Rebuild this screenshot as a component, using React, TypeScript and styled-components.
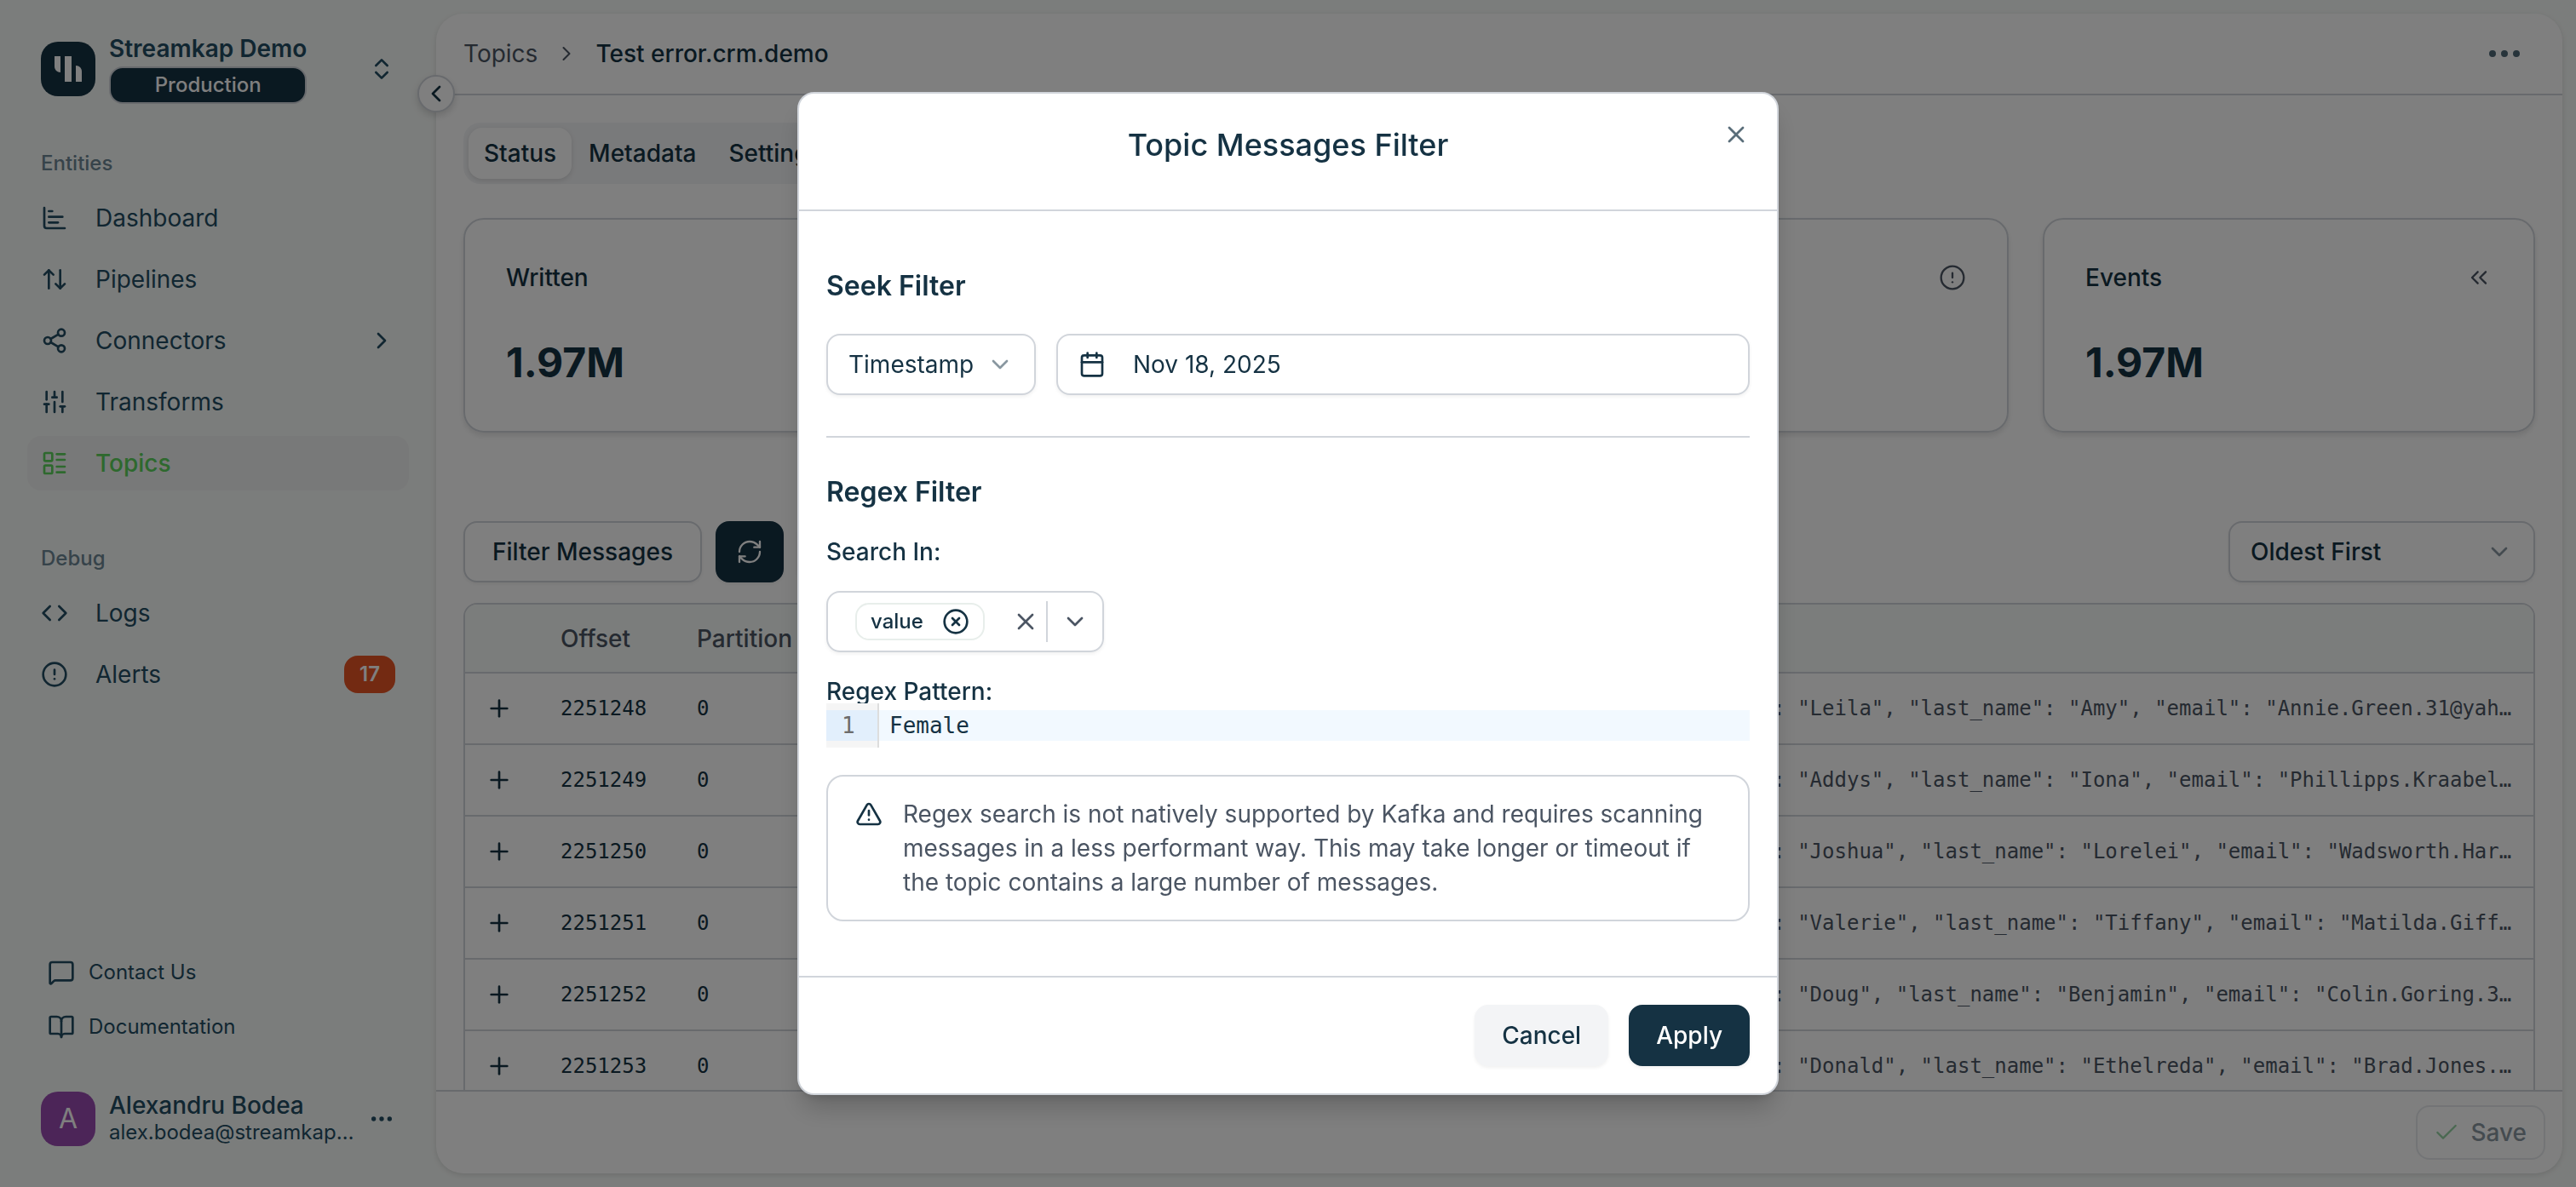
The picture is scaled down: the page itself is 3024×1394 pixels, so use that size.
import React from "react";
import styled, { createGlobalStyle, css } from "styled-components";
import {
  ArrowUpDown,
  BookOpen,
  Calendar,
  ChartBar,
  Check,
  ChevronDown,
  ChevronLeft,
  ChevronRight,
  ChevronsLeft,
  ChevronsUpDown,
  CircleAlert,
  CircleX,
  Code,
  Download,
  Ellipsis,
  LayoutList,
  MessageSquare,
  Plus,
  RefreshCw,
  Share2,
  SlidersVertical,
  TriangleAlert,
  X,
} from "lucide-react";

const color = {
  ink: "#153243",
  sidebarInk: "#234d63",
  muted: "#4b5563",
  line: "#d1d5db",
  canvas: "#f7faf8",
  soft: "#f3f4f6",
  green: "#5cd25c",
  orange: "#e65424",
};

const shadow = "0 2px 4px rgba(0, 0, 0, 0.06)";
const mono = '"DejaVu Sans Mono", "Liberation Mono", monospace';

const GlobalStyle = createGlobalStyle`
  *, *::before, *::after { box-sizing: border-box; }
  body {
    margin: 0;
    background: ${color.canvas};
    color: ${color.ink};
    font-family: Inter, "Liberation Sans", sans-serif;
    font-size: 28px;
    line-height: 40px;
  }
  button, input, select { font: inherit; color: inherit; }
  h1, h2, h3, p { margin: 0; font: inherit; }
  svg { display: block; flex: none; }
`;

/* ---------- shell ---------- */

const Shell = styled.div`
  display: flex;
  height: 100vh;
  padding: 16px 16px 16px 0;
  overflow: hidden;
`;

const Sidebar = styled.aside`
  display: flex;
  flex-direction: column;
  flex: none;
  width: 512px;
  padding: 24px 32px 32px;
  color: ${color.sidebarInk};
`;

const BareButton = styled.button`
  display: flex;
  align-items: center;
  justify-content: center;
  padding: 0;
  border: 0;
  background: none;
  cursor: pointer;
`;

const Workspace = styled.div`
  display: flex;
  align-items: center;
  gap: 16px;
  padding: 0 16px;
  margin-bottom: 54px;
`;

const WorkspaceText = styled.div`
  display: flex;
  flex-direction: column;
  gap: 4px;
  margin-right: auto;
`;

const WorkspaceName = styled.span`
  font-weight: 600;
  line-height: 34px;
`;

const EnvBadge = styled.span`
  border: 2px solid ${color.line};
  border-radius: 16px;
  background: ${color.ink};
  color: #fff;
  font-size: 24px;
  font-weight: 500;
  line-height: 40px;
  text-align: center;
`;

const NavGroup = styled.nav`
  display: flex;
  flex-direction: column;
  gap: 8px;
  margin-bottom: 64px;
`;

const NavHeading = styled.h3`
  padding: 0 16px;
  margin-bottom: 8px;
  color: #6d8694;
  font-size: 24px;
  font-weight: 500;
  line-height: 32px;
`;

const NavLink = styled.a<{ $active?: boolean }>`
  display: flex;
  align-items: center;
  gap: 32px;
  height: 64px;
  padding: 0 16px;
  border-radius: 16px;
  color: inherit;
  text-decoration: none;
  ${(p) =>
    p.$active &&
    css`
      background: #f1f2f2;
      color: ${color.green};
      font-weight: 500;
    `}
`;

const NavLabel = styled.span`
  flex: 1;
`;

const CountBadge = styled.span`
  padding: 0 18px;
  border-radius: 16px;
  background: ${color.orange};
  color: #fff;
  font-size: 24px;
  font-weight: 600;
  line-height: 44px;
`;

const HelpLinks = styled.nav`
  display: flex;
  flex-direction: column;
  gap: 32px;
  padding: 0 24px;
  margin: auto 0 60px;
`;

const HelpLink = styled.a`
  display: flex;
  align-items: center;
  gap: 16px;
  color: inherit;
  font-size: 24px;
  line-height: 32px;
  text-decoration: none;
`;

const Account = styled.div`
  display: flex;
  align-items: center;
  gap: 16px;
  padding: 0 16px;
`;

const Avatar = styled.span`
  flex: none;
  width: 64px;
  border-radius: 20px;
  background: #984ab0;
  color: #fff;
  font-size: 32px;
  line-height: 64px;
  text-align: center;
`;

const AccountText = styled.div`
  flex: 1;
  min-width: 0;
  line-height: 32px;
`;

const AccountName = styled.div`
  font-weight: 500;
`;

const AccountEmail = styled.div`
  overflow: hidden;
  font-size: 24px;
  text-overflow: ellipsis;
  white-space: nowrap;
`;

/* ---------- main panel ---------- */

const Panel = styled.main`
  position: relative;
  display: flex;
  flex: 1;
  flex-direction: column;
  min-width: 0;
  border-radius: 32px;
  background: #fff;
  box-shadow: 0 2px 6px rgba(0, 0, 0, 0.12);
`;

const CollapseButton = styled(BareButton)`
  position: absolute;
  top: 72px;
  left: -22px;
  width: 44px;
  height: 44px;
  border: 2px solid ${color.line};
  border-radius: 50%;
  background: #fff;
  box-shadow: 0 4px 8px rgba(0, 0, 0, 0.15);
`;

const PanelHeader = styled.header`
  display: flex;
  align-items: center;
  justify-content: space-between;
  flex: none;
  height: 96px;
  padding: 0 44px 0 32px;
  border-bottom: 2px solid ${color.line};
`;

const Crumbs = styled.nav`
  display: flex;
  align-items: center;
  gap: 20px;
  color: ${color.muted};
`;

const CrumbLink = styled.a`
  color: inherit;
  text-decoration: none;
`;

const CrumbCurrent = styled.span`
  color: ${color.ink};
  font-weight: 500;
`;

const PanelBody = styled.div`
  flex: 1;
  min-height: 0;
  padding: 32px 32px 0;
  overflow: hidden;
`;

const TabList = styled.div`
  display: inline-flex;
  gap: 2px;
  height: 72px;
  padding: 6px;
  border-radius: 20px;
  background: ${color.soft};
`;

const Tab = styled.button<{ $selected?: boolean }>`
  padding: 0 18px;
  border: 0;
  border-radius: 16px;
  background: ${(p) => (p.$selected ? "#fff" : "transparent")};
  box-shadow: ${(p) => (p.$selected ? "0 2px 6px rgba(0, 0, 0, 0.12)" : "none")};
  font-weight: 500;
`;

const Stats = styled.section`
  display: grid;
  grid-template-columns: repeat(4, 1fr);
  gap: 40px;
  margin-top: 40px;
`;

const StatCard = styled.article`
  display: flex;
  flex-direction: column;
  gap: 52px;
  padding: 48px 48px 52px;
  border: 2px solid ${color.line};
  border-radius: 24px;
  box-shadow: 0 4px 6px rgba(0, 0, 0, 0.1);
`;

const StatHead = styled.div`
  display: flex;
  align-items: center;
  justify-content: space-between;
  font-weight: 500;

  svg {
    color: ${color.muted};
  }
`;

const StatValue = styled.div`
  font-size: 48px;
  font-weight: 700;
  line-height: 56px;
`;

const Toolbar = styled.div`
  display: flex;
  gap: 16px;
  margin: 104px 0 24px;
`;

const Button = styled.button<{ $tone: "outline" | "solid" | "soft" }>`
  display: flex;
  align-items: center;
  justify-content: center;
  height: 72px;
  padding: 0 32px;
  border: 2px solid transparent;
  border-radius: 16px;
  box-shadow: ${shadow};
  font-weight: 500;
  cursor: pointer;
  ${(p) =>
    ({
      outline: css`
        border-color: ${color.line};
        background: #fff;
      `,
      solid: css`
        border-color: ${color.ink};
        background: ${color.ink};
        color: #fff;
      `,
      soft: css`
        border-color: ${color.soft};
        background: ${color.soft};
      `,
    })[p.$tone]}
`;

const IconButton = styled(Button)`
  width: 80px;
  padding: 0;
`;

const SelectBox = styled.div<{ $wide?: boolean }>`
  position: relative;
  display: flex;
  flex: none;
  ${(p) =>
    p.$wide &&
    css`
      width: 360px;
      margin-left: auto;
      font-weight: 500;
    `}

  select {
    width: 100%;
    height: 72px;
    padding: 0 70px 0 24px;
    border: 2px solid ${color.line};
    border-radius: 16px;
    background: #fff;
    box-shadow: ${shadow};
    appearance: none;
  }

  svg {
    position: absolute;
    top: 20px;
    right: 26px;
    opacity: 0.5;
    pointer-events: none;
  }
`;

const TableFrame = styled.div`
  overflow: hidden;
  border: 2px solid ${color.line};
  border-radius: 16px;
`;

const Table = styled.table`
  width: 100%;
  border-spacing: 0;
  table-layout: fixed;

  th,
  td {
    overflow: hidden;
    padding: 0 24px;
    border-bottom: 2px solid ${color.line};
    text-align: left;
    text-overflow: ellipsis;
    white-space: nowrap;
  }

  th {
    height: 81px;
    background: ${color.canvas};
    color: ${color.muted};
    font-weight: 500;
  }

  td {
    height: 84px;
    font-family: ${mono};
    font-size: 24px;
  }
`;

const Col = styled.col<{ $width?: number }>`
  width: ${(p) => (p.$width ? `${p.$width}px` : "auto")};
`;

const ValueCell = styled.td`
  color: ${color.muted};
`;

const PanelFooter = styled.footer`
  display: flex;
  justify-content: flex-end;
  flex: none;
  padding: 16px 20px;
  border-top: 2px solid ${color.line};
`;

const SaveButton = styled.button`
  display: flex;
  align-items: center;
  gap: 12px;
  height: 64px;
  padding: 0 20px 0 18px;
  border: 2px solid ${color.line};
  border-radius: 16px;
  background: #fff;
  font-weight: 500;
  opacity: 0.5;

  svg {
    color: #2ea84a;
  }
`;

/* ---------- dialog ---------- */

const Backdrop = styled.div`
  position: fixed;
  inset: 0;
  display: flex;
  align-items: center;
  justify-content: center;
  background: rgba(0, 0, 0, 0.5);
`;

const Dialog = styled.div`
  position: relative;
  width: 1152px;
  max-width: 100%;
  border: 2px solid ${color.line};
  border-radius: 20px;
  background: #fff;
  box-shadow: 0 20px 30px -6px rgba(0, 0, 0, 0.2), 0 8px 12px -8px rgba(0, 0, 0, 0.2);
`;

const DialogHeader = styled.header`
  padding: 40px 32px 56px;
  border-bottom: 2px solid ${color.line};
`;

const DialogTitle = styled.h1`
  font-size: 36px;
  font-weight: 500;
  text-align: center;
`;

const CloseButton = styled(BareButton)`
  position: absolute;
  top: 32px;
  right: 32px;
  opacity: 0.7;
`;

const DialogBody = styled.div`
  padding: 72px 32px 64px;
`;

const SectionTitle = styled.h2`
  margin-bottom: 40px;
  font-size: 32px;
  font-weight: 600;
  line-height: 32px;
`;

const FieldRow = styled.div`
  display: flex;
  gap: 24px;
`;

const DateButton = styled.button`
  display: flex;
  align-items: center;
  flex: 1;
  gap: 32px;
  height: 72px;
  padding: 0 24px;
  border: 2px solid ${color.line};
  border-radius: 16px;
  background: #fff;
  box-shadow: ${shadow};
`;

const Divider = styled.hr`
  height: 2px;
  margin: 48px 0;
  border: 0;
  background: ${color.line};
`;

const FieldLabel = styled.label`
  display: block;
  font-weight: 500;
  line-height: 28px;
`;

const MultiSelect = styled.div`
  display: flex;
  align-items: center;
  width: fit-content;
  height: 72px;
  padding: 0 16px 0 32px;
  margin: 32px 0;
  border: 2px solid ${color.line};
  border-radius: 16px;
  box-shadow: ${shadow};
  color: ${color.muted};
`;

const Chip = styled.span`
  display: flex;
  align-items: center;
  gap: 22px;
  height: 44px;
  padding: 0 16px;
  margin-right: 32px;
  border: 2px solid #e8eeeb;
  border-radius: 16px;
  color: ${color.ink};
  font-size: 24px;
  font-weight: 500;
`;

const Separator = styled.span`
  width: 2px;
  height: 48px;
  margin: 0 16px 0 8px;
  background: ${color.line};
`;

const Editor = styled.div`
  position: relative;
  display: flex;
  font-family: ${mono};
  font-size: 26px;
  line-height: 36px;
`;

const Gutter = styled.div`
  flex: none;
  width: 62px;
  padding: 8px 0;
  border-right: 2px solid #dddddd;
  background: #f5f5f5;
`;

const LineNumber = styled.div`
  padding: 0 10px 0 18px;
  background: #e2effc;
  color: #6c6c6c;
`;

const CodeLine = styled.input`
  flex: 1;
  min-width: 0;
  height: 36px;
  padding: 0 12px;
  margin: 8px 0;
  border: 0;
  outline: 0;
  background: #f2f9ff;
`;

const Notice = styled.div`
  display: flex;
  align-items: flex-start;
  gap: 24px;
  padding: 24px 32px;
  margin-top: 32px;
  border: 2px solid ${color.line};
  border-radius: 20px;

  svg {
    margin-top: 4px;
  }

  p {
    color: ${color.muted};
  }
`;

const DialogFooter = styled.footer`
  display: flex;
  justify-content: flex-end;
  gap: 24px;
  padding: 32px;
  border-top: 2px solid ${color.line};
`;

const DialogButton = styled(Button)`
  padding: 0 30px;
`;

/* ---------- data ---------- */

const entities = [
  { label: "Dashboard", icon: ChartBar },
  { label: "Pipelines", icon: ArrowUpDown },
  { label: "Connectors", icon: Share2, nested: true },
  { label: "Transforms", icon: SlidersVertical },
  { label: "Topics", icon: LayoutList, active: true },
];

const debug = [
  { label: "Logs", icon: Code },
  { label: "Alerts", icon: CircleAlert, count: 17 },
];

const stats = [
  { label: "Written", value: "1.97M" },
  { label: "Read", value: "1.97M" },
  { label: "Errors", value: "0", icon: CircleAlert },
  { label: "Events", value: "1.97M", icon: ChevronsLeft },
];

const messages = [
  { offset: 2251248, first: "Leila", last: "Amy", email: "Annie.Green.31@yahoo.com" },
  { offset: 2251249, first: "Addys", last: "Iona", email: "Phillipps.Kraabel@yahoo.com" },
  { offset: 2251250, first: "Joshua", last: "Lorelei", email: "Wadsworth.Harris@yahoo.com" },
  { offset: 2251251, first: "Valerie", last: "Tiffany", email: "Matilda.Gifford@yahoo.com" },
  { offset: 2251252, first: "Doug", last: "Benjamin", email: "Colin.Goring.31@yahoo.com" },
  { offset: 2251253, first: "Donald", last: "Ethelreda", email: "Brad.Jones.12@yahoo.com" },
];

const columns = [
  { label: "", width: 88 },
  { label: "Offset", width: 160 },
  { label: "Partition", width: 902 },
  { label: "Value" },
];

/* ---------- parts ---------- */

const icon = { size: 32, strokeWidth: 2, "aria-hidden": true } as const;
const thin = { size: 32, strokeWidth: 1.75, "aria-hidden": true } as const;

type NavEntry = {
  label: string;
  icon: React.ElementType;
  active?: boolean;
  nested?: boolean;
  count?: number;
};

function NavItem({ entry }: { entry: NavEntry }) {
  const Icon = entry.icon;
  return (
    <NavLink href="#" $active={entry.active}>
      <Icon {...icon} />
      <NavLabel>{entry.label}</NavLabel>
      {entry.nested && <ChevronRight {...icon} />}
      {entry.count && <CountBadge>{entry.count}</CountBadge>}
    </NavLink>
  );
}

function Logo() {
  return (
    <svg width="64" height="64" viewBox="0 0 64 64" aria-hidden>
      <rect width="64" height="64" rx="20" fill={color.ink} />
      <path d="M16 17h7v19c-4 0-7-3-7-7z" fill="#fff" />
      <path d="M28 17h8v30h-8z" fill="#fff" />
      <path d="M41 28c4 0 7 3 7 7v12h-7z" fill="#fff" />
    </svg>
  );
}

function SideNav() {
  return (
    <Sidebar>
      <Workspace>
        <Logo />
        <WorkspaceText>
          <WorkspaceName>Streamkap Demo</WorkspaceName>
          <EnvBadge>Production</EnvBadge>
        </WorkspaceText>
        <BareButton aria-label="Switch workspace">
          <ChevronsUpDown {...icon} />
        </BareButton>
      </Workspace>
      <NavGroup>
        <NavHeading>Entities</NavHeading>
        {entities.map((entry) => (
          <NavItem key={entry.label} entry={entry} />
        ))}
      </NavGroup>
      <NavGroup>
        <NavHeading>Debug</NavHeading>
        {debug.map((entry) => (
          <NavItem key={entry.label} entry={entry} />
        ))}
      </NavGroup>
      <HelpLinks>
        <HelpLink href="#">
          <MessageSquare {...icon} />
          Contact Us
        </HelpLink>
        <HelpLink href="#">
          <BookOpen {...icon} />
          Documentation
        </HelpLink>
      </HelpLinks>
      <Account>
        <Avatar>A</Avatar>
        <AccountText>
          <AccountName>Alexandru Bodea</AccountName>
          <AccountEmail>alex.bodea@streamkap.com</AccountEmail>
        </AccountText>
        <BareButton aria-label="Account menu">
          <Ellipsis {...icon} />
        </BareButton>
      </Account>
    </Sidebar>
  );
}

function MessagesTable() {
  return (
    <TableFrame>
      <Table>
        <colgroup>
          {columns.map((c) => (
            <Col key={c.label} $width={c.width} />
          ))}
        </colgroup>
        <thead>
          <tr>
            {columns.map((c) => (
              <th key={c.label}>{c.label}</th>
            ))}
          </tr>
        </thead>
        <tbody>
          {messages.map((m) => (
            <tr key={m.offset}>
              <td>
                <BareButton aria-label={`Expand ${m.offset}`}>
                  <Plus {...icon} />
                </BareButton>
              </td>
              <td>{m.offset}</td>
              <td>0</td>
              <ValueCell>
                {`{"id": ${m.offset % 10000}, "first_name": "${m.first}", "last_name": "${m.last}", "email": "${m.email}"}`}
              </ValueCell>
            </tr>
          ))}
        </tbody>
      </Table>
    </TableFrame>
  );
}

function TopicPanel() {
  return (
    <Panel>
      <PanelHeader>
        <Crumbs aria-label="Breadcrumb">
          <CrumbLink href="#">Topics</CrumbLink>
          <ChevronRight size={28} strokeWidth={1.75} />
          <CrumbCurrent>Test error.crm.demo</CrumbCurrent>
        </Crumbs>
        <BareButton aria-label="Topic menu">
          <Ellipsis size={48} strokeWidth={2} color="#4f6877" />
        </BareButton>
      </PanelHeader>
      <CollapseButton aria-label="Collapse sidebar">
        <ChevronLeft {...icon} />
      </CollapseButton>
      <PanelBody>
        <TabList role="tablist">
          <Tab role="tab" aria-selected $selected>
            Status
          </Tab>
          <Tab role="tab">Metadata</Tab>
          <Tab role="tab">Settings</Tab>
        </TabList>
        <Stats>
          {stats.map(({ label, value, icon: Icon }) => (
            <StatCard key={label}>
              <StatHead>
                {label}
                {Icon && <Icon {...thin} />}
              </StatHead>
              <StatValue>{value}</StatValue>
            </StatCard>
          ))}
        </Stats>
        <Toolbar>
          <Button $tone="outline">Filter Messages</Button>
          <IconButton $tone="solid" aria-label="Refresh">
            <RefreshCw {...thin} />
          </IconButton>
          <IconButton $tone="outline" aria-label="Download">
            <Download {...thin} />
          </IconButton>
          <SelectBox $wide>
            <select aria-label="Sort order">
              <option>Oldest First</option>
            </select>
            <ChevronDown {...icon} />
          </SelectBox>
        </Toolbar>
        <MessagesTable />
      </PanelBody>
      <PanelFooter>
        <SaveButton disabled>
          <Check {...thin} />
          Save
        </SaveButton>
      </PanelFooter>
    </Panel>
  );
}

function FilterDialog() {
  return (
    <Backdrop>
      <Dialog role="dialog" aria-modal="true" aria-labelledby="dialog-title">
        <DialogHeader>
          <DialogTitle id="dialog-title">Topic Messages Filter</DialogTitle>
          <CloseButton aria-label="Close">
            <X {...icon} />
          </CloseButton>
        </DialogHeader>
        <DialogBody>
          <SectionTitle>Seek Filter</SectionTitle>
          <FieldRow>
            <SelectBox>
              <select aria-label="Seek by">
                <option>Timestamp</option>
              </select>
              <ChevronDown {...icon} />
            </SelectBox>
            <DateButton>
              <Calendar {...icon} />
              Nov 18, 2025
            </DateButton>
          </FieldRow>
          <Divider />
          <SectionTitle>Regex Filter</SectionTitle>
          <FieldLabel as="div" id="search-in">
            Search In:
          </FieldLabel>
          <MultiSelect role="group" aria-labelledby="search-in">
            <Chip>
              value
              <BareButton aria-label="Remove value">
                <CircleX {...icon} />
              </BareButton>
            </Chip>
            <BareButton aria-label="Clear all">
              <X {...icon} />
            </BareButton>
            <Separator />
            <BareButton aria-label="Show options">
              <ChevronDown {...icon} />
            </BareButton>
          </MultiSelect>
          <FieldLabel htmlFor="pattern">Regex Pattern:</FieldLabel>
          <Editor>
            <Gutter>
              <LineNumber>1</LineNumber>
            </Gutter>
            <CodeLine id="pattern" defaultValue="Female" spellCheck={false} />
          </Editor>
          <Notice role="note">
            <TriangleAlert {...icon} />
            <p>
              Regex search is not natively supported by Kafka and requires scanning messages in a
              less performant way. This may take longer or timeout if the topic contains a large
              number of messages.
            </p>
          </Notice>
        </DialogBody>
        <DialogFooter>
          <DialogButton $tone="soft">Cancel</DialogButton>
          <DialogButton $tone="solid">Apply</DialogButton>
        </DialogFooter>
      </Dialog>
    </Backdrop>
  );
}

export default function App() {
  return (
    <>
      <GlobalStyle />
      <Shell>
        <SideNav />
        <TopicPanel />
      </Shell>
      <FilterDialog />
    </>
  );
}
